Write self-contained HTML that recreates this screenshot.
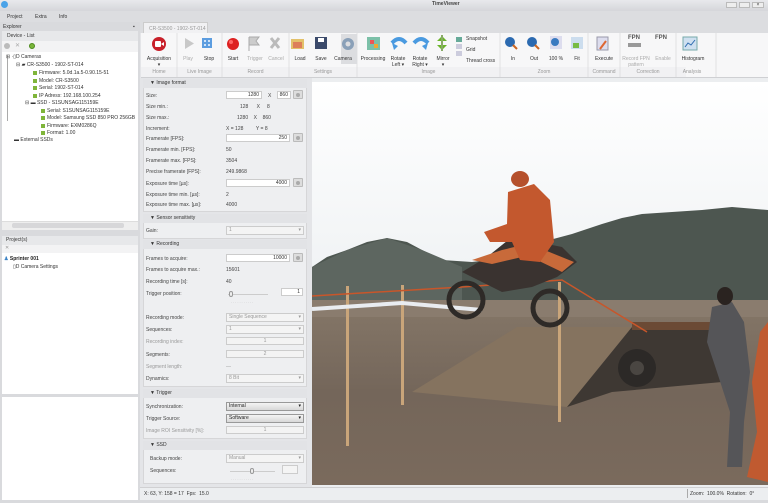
<!DOCTYPE html>
<html><head><meta charset="utf-8"><style>
*{margin:0;padding:0;box-sizing:border-box}
body{width:768px;height:503px;overflow:hidden;background:#e4e5e8;font-family:"Liberation Sans",sans-serif;font-size:5px;color:#333;position:relative}
.a{position:absolute;white-space:nowrap}
.lbl{position:absolute;left:146px;font-size:5px;color:#444}
.val{position:absolute;font-size:5px;color:#444}
.in{position:absolute;left:226px;width:64px;height:8px;background:#fff;border:1px solid #ccc;font-size:5px;text-align:right;padding-right:2px;line-height:6px}
.dis{background:#f3f3f3;color:#999;text-align:left;padding-left:2px}
.btn{position:absolute;left:293px;width:10px;height:9px;border:1px solid #bbb;background:#ddd;border-radius:1px}
.btn::after{content:"";position:absolute;left:2px;top:2px;width:4px;height:4px;border-radius:50%;background:#aaa}
.sec{position:absolute;left:143px;width:164px;background:#eeeff1;border:1px solid #d6d6d8}
.hd{position:absolute;left:143px;width:164px;height:9px;background:#e2e3e6;font-size:5px;line-height:9px;padding-left:7px;color:#333}
.dd{position:absolute;left:226px;width:78px;height:9px;border:1px solid #ccc;background:#f4f4f4;font-size:5px;line-height:7px;padding-left:2px;color:#999}
.dd::after{content:"▾";position:absolute;right:2px;top:0;color:#999}
.dk{background:linear-gradient(#f4f4f4,#d8d8d8);color:#222;border-color:#999}
.dk::after{color:#222}
.rl{position:absolute;top:56px;font-size:5px;color:#333;text-align:center}
.gl{position:absolute;top:69px;font-size:5px;color:#999;text-align:center}
.tr{position:absolute;font-size:5px;color:#333}
.sq{display:inline-block;width:4px;height:4px;background:#7fb53a;margin-right:2px;vertical-align:-0.5px}
</style></head><body>
<div class="a" style="left:0;top:0;width:768px;height:11px;background:linear-gradient(#e8e9ec,#d5d6da)"></div>
<div class="a" style="left:1px;top:1px;width:7px;height:7px;border-radius:50%;background:#4aa3e8"></div>
<div class="a" style="left:432px;top:1px;font-size:5px;font-weight:bold;color:#444">TimeViewer</div>
<div class="a" style="left:726px;top:2px;width:11px;height:6px;border:1px solid #bbb;background:#eee"></div>
<div class="a" style="left:739px;top:2px;width:11px;height:6px;border:1px solid #bbb;background:#eee"></div>
<div class="a" style="left:752px;top:2px;width:12px;height:6px;border:1px solid #bbb;background:#eee;font-size:5px;text-align:center;line-height:5px">×</div>
<div class="a" style="left:0;top:11px;width:768px;height:11px;background:#dcdde0"></div>
<div class="a" style="left:7px;top:14px;font-size:5px">Project</div>
<div class="a" style="left:35px;top:14px;font-size:5px">Extra</div>
<div class="a" style="left:59px;top:14px;font-size:5px">Info</div>
<div class="a" style="left:0;top:22px;width:140px;height:481px;background:#d9dadd"></div>
<div class="a" style="left:3px;top:24px;font-size:5px;color:#333">Explorer</div>
<div class="a" style="left:133px;top:24px;font-size:5px">▪</div>
<div class="a" style="left:2px;top:31px;width:136px;height:10px;background:#e7e8ea"></div>
<div class="a" style="left:7px;top:33px;font-size:5px">Device - List</div>
<div class="a" style="left:2px;top:41px;width:136px;height:11px;background:#f3f3f4"></div>
<div class="a" style="left:4px;top:43px;width:6px;height:6px;border-radius:50%;background:#bbb"></div>
<div class="a" style="left:15px;top:42px;font-size:6px;color:#aaa">✕</div>
<div class="a" style="left:29px;top:43px;width:6px;height:6px;border-radius:50%;background:#7ab53a;border:1px solid #4d8a1c"></div>
<div class="a" style="left:2px;top:52px;width:136px;height:169px;background:#fff"></div>
<div class="a" style="left:7px;top:55px;width:1px;height:66px;background:#aaa"></div>
<div class="tr" style="left:6px;top:54px">⊟ ·▯D Cameras</div>
<div class="tr" style="left:16px;top:62px">⊟ ▰ CR-S3500 - 1902-ST-014</div>
<div class="tr" style="left:33px;top:70px"><span class="sq"></span>Firmware: 5.0d.1a.5-0.90.15-51</div>
<div class="tr" style="left:33px;top:78px"><span class="sq"></span>Model: CR-S3500</div>
<div class="tr" style="left:33px;top:85px"><span class="sq"></span>Serial: 1902-ST-014</div>
<div class="tr" style="left:33px;top:93px"><span class="sq"></span>IP Adress: 192.168.100.254</div>
<div class="tr" style="left:25px;top:100px">⊟ ▬ SSD - S1SUNSAG115159E</div>
<div class="tr" style="left:41px;top:108px"><span class="sq"></span>Serial: S1SUNSAG115159E</div>
<div class="tr" style="left:41px;top:115px"><span class="sq"></span>Model: Samsung SSD 850 PRO 256GB</div>
<div class="tr" style="left:41px;top:123px"><span class="sq"></span>Firmware: EXM0286Q</div>
<div class="tr" style="left:41px;top:130px"><span class="sq"></span>Format: 1.00</div>
<div class="tr" style="left:14px;top:137px">▬ External SSDs</div>
<div class="a" style="left:2px;top:221px;width:136px;height:9px;background:#eee;border-top:1px solid #ddd"></div>
<div class="a" style="left:12px;top:223px;width:112px;height:5px;background:#d7d7d9;border-radius:2px"></div>
<div class="a" style="left:2px;top:236px;width:136px;height:9px;background:#e7e8ea"></div>
<div class="a" style="left:6px;top:237px;font-size:5px">Project(s)</div>
<div class="a" style="left:2px;top:245px;width:136px;height:8px;background:#f3f3f4"></div>
<div class="a" style="left:5px;top:245px;font-size:5px;color:#999">✕</div>
<div class="a" style="left:2px;top:253px;width:136px;height:141px;background:#fff"></div>
<div class="a" style="left:4px;top:256px;font-size:5px;font-weight:bold;color:#222"><span style="color:#3b82c4">♟</span> Sprinter 001</div>
<div class="a" style="left:13px;top:264px;font-size:5px">▯D Camera Settings</div>
<div class="a" style="left:2px;top:397px;width:136px;height:103px;background:#fff"></div>
<div class="a" style="left:140px;top:22px;width:628px;height:11px;background:#dcdde0"></div>
<div class="a" style="left:143px;top:22px;width:65px;height:11px;background:#f1f1f3;border:1px solid #ccc;border-bottom:none;font-size:5px;color:#999;padding:3px 0 0 5px">CR-S3500 - 1902-ST-014</div>
<div class="a" style="left:141px;top:33px;width:627px;height:45px;background:#f7f7f8;border-bottom:1px solid #cfd0d3"></div>
<div class="a" style="left:141px;top:67px;width:545px;height:10px;background:#f1f1f3"></div>
<svg class="a" style="left:141px;top:33px" width="627" height="45">
<g stroke="#e0e0e2" stroke-width="1"><line x1="36" y1="0" x2="36" y2="44"/><line x1="81" y1="0" x2="81" y2="44"/><line x1="148" y1="0" x2="148" y2="44"/><line x1="216" y1="0" x2="216" y2="44"/><line x1="359" y1="0" x2="359" y2="44"/><line x1="447" y1="0" x2="447" y2="44"/><line x1="479" y1="0" x2="479" y2="44"/><line x1="535" y1="0" x2="535" y2="44"/><line x1="575" y1="0" x2="575" y2="44"/></g>
<circle cx="18" cy="11" r="7" fill="#c8202a"/><rect x="14" y="8" width="6" height="6" rx="1" fill="#fff"/><path d="M20 11l3-2v4z" fill="#fff"/>
<path d="M44 5v11l9-5.5z" fill="#c8c8c8"/>
<rect x="61" y="5" width="10" height="10" fill="#5c9de0"/><g fill="#cfe3f8"><rect x="63" y="7" width="2" height="2"/><rect x="67" y="7" width="2" height="2"/><rect x="63" y="11" width="2" height="2"/><rect x="67" y="11" width="2" height="2"/></g>
<circle cx="92" cy="11" r="6" fill="#d22"/><circle cx="90" cy="9" r="2" fill="#f66"/>
<path d="M108 4v14M108 4h10l-3 4 3 4h-10" stroke="#aaa" fill="#ccc"/>
<path d="M130 5l8 10M138 5l-8 10" stroke="#bbb" stroke-width="3"/>
<rect x="150" y="6" width="13" height="10" fill="#e3c16a"/><rect x="152" y="9" width="9" height="6" fill="#d9534f" opacity=".6"/>
<rect x="174" y="4" width="12" height="12" fill="#3b4a6b"/><rect x="177" y="5" width="6" height="4" fill="#fff"/>
<rect x="200" y="1" width="16" height="30" fill="#dcdde0"/><circle cx="207" cy="11" r="6" fill="#8aa0b8"/><circle cx="207" cy="11" r="2.5" fill="#dcdde0"/>
<rect x="226" y="4" width="13" height="13" fill="#7cc0a8"/><rect x="229" y="7" width="4" height="4" fill="#e55"/><rect x="233" y="11" width="4" height="4" fill="#ea3"/>
<path d="M251 10q7-8 14 0" stroke="#4a9ae0" stroke-width="4" fill="none"/><path d="M251 10l2 7 4-4z" fill="#4a9ae0"/>
<path d="M273 10q7-8 14 0" stroke="#4a9ae0" stroke-width="4" fill="none"/><path d="M287 10l-2 7-4-4z" fill="#4a9ae0"/>
<path d="M296 8h10l-5-5zM296 12h10l-5 5z" fill="#6ab42a"/><rect x="300" y="2" width="2" height="16" fill="#8a6"/>
<rect x="315" y="4" width="6" height="5" fill="#6a9"/><rect x="315" y="11" width="6" height="5" fill="#ccd"/><rect x="315" y="18" width="6" height="5" fill="#ccd"/>
<circle cx="369" cy="9" r="5" fill="#2c6ab0"/><path d="M372 12l4 4" stroke="#c62" stroke-width="2"/>
<circle cx="391" cy="9" r="5" fill="#2c6ab0"/><path d="M394 12l4 4" stroke="#c62" stroke-width="2"/>
<rect x="409" y="3" width="12" height="13" fill="#dde"/><circle cx="414" cy="9" r="4" fill="#3a7ac0"/>
<rect x="430" y="4" width="12" height="12" fill="#cde"/><rect x="432" y="10" width="6" height="5" fill="#7b4"/>
<rect x="456" y="4" width="11" height="13" fill="#dde" stroke="#99a"/><path d="M465 8l-6 8" stroke="#d63" stroke-width="2"/>
<rect x="487" y="10" width="13" height="4" fill="#999"/>
<rect x="542" y="4" width="14" height="13" fill="#cfe0f0" stroke="#7aa"/><path d="M544 14l3-4 3 2 4-5" stroke="#2c6ab0" fill="none"/>
</svg>
<div class="rl" style="left:141px;width:36px">Acquisition<br>▾</div>
<div class="rl" style="left:181px;width:14px;color:#aaa">Play</div>
<div class="rl" style="left:200px;width:18px">Stop</div>
<div class="rl" style="left:224px;width:18px">Start</div>
<div class="rl" style="left:244px;width:22px;color:#aaa">Trigger</div>
<div class="rl" style="left:266px;width:20px;color:#aaa">Cancel</div>
<div class="rl" style="left:290px;width:20px">Load</div>
<div class="rl" style="left:311px;width:20px">Save</div>
<div class="rl" style="left:331px;width:24px">Camera</div>
<div class="rl" style="left:358px;width:30px">Processing</div>
<div class="rl" style="left:386px;width:24px">Rotate<br>Left ▾</div>
<div class="rl" style="left:408px;width:24px">Rotate<br>Right ▾</div>
<div class="rl" style="left:432px;width:22px">Mirror<br>▾</div>
<div class="a" style="left:466px;top:36px;font-size:5px">Snapshot</div>
<div class="a" style="left:466px;top:47px;font-size:5px">Grid</div>
<div class="a" style="left:466px;top:58px;font-size:5px">Thread cross</div>
<div class="rl" style="left:503px;width:20px">In</div>
<div class="rl" style="left:524px;width:20px">Out</div>
<div class="rl" style="left:545px;width:22px">100 %</div>
<div class="rl" style="left:567px;width:20px">Fit</div>
<div class="rl" style="left:589px;width:30px">Execute</div>
<div class="a" style="left:628px;top:35px;font-size:6px;font-weight:bold;color:#555">FPN</div>
<div class="a" style="left:655px;top:35px;font-size:6px;font-weight:bold;color:#555">FPN</div>
<div class="rl" style="left:620px;width:32px;color:#aaa">Record FPN<br>pattern</div>
<div class="rl" style="left:650px;width:26px;color:#aaa">Enable</div>
<div class="rl" style="left:676px;width:34px">Histogram</div>
<div class="gl" style="left:141px;width:36px">Home</div>
<div class="gl" style="left:177px;width:45px">Live Image</div>
<div class="gl" style="left:222px;width:67px">Record</div>
<div class="gl" style="left:289px;width:68px">Settings</div>
<div class="gl" style="left:357px;width:143px">Image</div>
<div class="gl" style="left:500px;width:88px">Zoom</div>
<div class="gl" style="left:588px;width:32px">Command</div>
<div class="gl" style="left:620px;width:56px">Correction</div>
<div class="gl" style="left:676px;width:32px">Analysis</div>
<div class="a" style="left:140px;top:78px;width:172px;height:409px;background:#e4e5e8"></div>
<div class="sec" style="top:79px;height:133px"></div>
<div class="hd" style="top:79px">▼ Image format</div>
<div class="lbl" style="top:93px">Size:</div><div class="in" style="top:91px;width:36px">1280</div><div class="val" style="left:268px;top:93px">X</div><div class="in" style="top:91px;left:277px;width:14px">860</div><div class="btn" style="top:90px"></div>
<div class="lbl" style="top:104px">Size min.:</div><div class="val" style="left:240px;top:104px">128 &nbsp;&nbsp;&nbsp;&nbsp;&nbsp;X &nbsp;&nbsp;&nbsp;&nbsp;8</div>
<div class="lbl" style="top:115px">Size max.:</div><div class="val" style="left:237px;top:115px">1280 &nbsp;&nbsp;&nbsp;X &nbsp;&nbsp;&nbsp;860</div>
<div class="lbl" style="top:126px">Increment:</div><div class="val" style="left:226px;top:126px">X = 128 &nbsp;&nbsp;&nbsp;&nbsp;&nbsp;&nbsp;&nbsp;&nbsp;Y = 8</div>
<div class="lbl" style="top:136px">Framerate [FPS]:</div><div class="in" style="top:134px">250</div><div class="btn" style="top:133px"></div>
<div class="lbl" style="top:147px">Framerate min. [FPS]:</div><div class="val" style="left:226px;top:147px">50</div>
<div class="lbl" style="top:158px">Framerate max. [FPS]:</div><div class="val" style="left:226px;top:158px">3504</div>
<div class="lbl" style="top:169px">Precise framerate [FPS]:</div><div class="val" style="left:226px;top:169px">249.9868</div>
<div class="lbl" style="top:181px">Exposure time [µs]:</div><div class="in" style="top:179px">4000</div><div class="btn" style="top:178px"></div>
<div class="lbl" style="top:192px">Exposure time min. [µs]:</div><div class="val" style="left:226px;top:192px">2</div>
<div class="lbl" style="top:202px">Exposure time max. [µs]:</div><div class="val" style="left:226px;top:202px">4000</div>
<div class="sec" style="top:214px;height:25px"></div>
<div class="hd" style="top:214px">▼ Sensor sensitivity</div>
<div class="lbl" style="top:228px">Gain:</div><div class="dd" style="top:226px">1</div>
<div class="sec" style="top:240px;height:147px"></div>
<div class="hd" style="top:240px">▼ Recording</div>
<div class="lbl" style="top:256px">Frames to acquire:</div><div class="in" style="top:254px">10000</div><div class="btn" style="top:253px"></div>
<div class="lbl" style="top:267px">Frames to acquire max.:</div><div class="val" style="left:226px;top:267px">15601</div>
<div class="lbl" style="top:279px">Recording time [s]:</div><div class="val" style="left:226px;top:279px">40</div>
<div class="lbl" style="top:291px">Trigger position:</div>
<div class="a" style="left:228px;top:294px;width:40px;height:1px;background:#ccc"></div>
<div class="a" style="left:229px;top:291px;width:4px;height:6px;background:#eee;border:1px solid #999;border-radius:2px"></div>
<div class="a" style="left:231px;top:299px;font-size:4px;color:#aaa;letter-spacing:1px">...........</div>
<div class="in" style="top:288px;left:281px;width:22px">1</div>
<div class="lbl" style="top:315px">Recording mode:</div><div class="dd" style="top:313px">Single Sequence</div>
<div class="lbl" style="top:327px">Sequences:</div><div class="dd" style="top:325px">1</div>
<div class="lbl" style="top:339px;color:#999">Recording index:</div><div class="in dis" style="top:337px;width:78px;text-align:center">1</div>
<div class="lbl" style="top:352px">Segments:</div><div class="in dis" style="top:350px;width:78px;text-align:center">2</div>
<div class="lbl" style="top:364px;color:#999">Segment length:</div><div class="val" style="left:226px;top:364px;color:#999">—</div>
<div class="lbl" style="top:376px">Dynamics:</div><div class="dd" style="top:374px">8 Bit</div>
<div class="sec" style="top:389px;height:50px"></div>
<div class="hd" style="top:389px">▼ Trigger</div>
<div class="lbl" style="top:404px">Synchronization:</div><div class="dd dk" style="top:402px">Internal</div>
<div class="lbl" style="top:416px">Trigger Source:</div><div class="dd dk" style="top:414px">Software</div>
<div class="lbl" style="top:428px;color:#999">Image ROI Sensitivity [%]:</div><div class="in dis" style="top:426px;width:78px;text-align:center">1</div>
<div class="sec" style="top:441px;height:43px"></div>
<div class="hd" style="top:441px">▼ SSD</div>
<div class="lbl" style="top:456px;left:150px">Backup mode:</div><div class="dd" style="top:454px">Manual</div>
<div class="lbl" style="top:468px;left:150px">Sequences:</div>
<div class="a" style="left:230px;top:471px;width:45px;height:1px;background:#ccc"></div>
<div class="a" style="left:250px;top:468px;width:4px;height:6px;background:#eee;border:1px solid #999;border-radius:2px"></div>
<div class="a" style="left:231px;top:476px;font-size:4px;color:#aaa;letter-spacing:1px">...........</div>
<div class="a" style="left:282px;top:465px;width:16px;height:9px;background:#f4f4f4;border:1px solid #ccc"></div>
<!-- photo -->
<div class="a" style="left:312px;top:78px;width:456px;height:409px;background:#eceef0"></div>
<svg class="a" style="left:312px;top:82px;width:456px;height:403px" width="456" height="403" viewBox="0 0 456 403" preserveAspectRatio="none">
<defs><linearGradient id="sk" x1="0" y1="0" x2="0" y2="1"><stop offset="0" stop-color="#ffffff"/><stop offset=".55" stop-color="#eef1f3"/><stop offset="1" stop-color="#d8dee2"/></linearGradient>
<linearGradient id="gr" x1="0" y1="0" x2="0" y2="1"><stop offset="0" stop-color="#857768"/><stop offset=".5" stop-color="#74665a"/><stop offset="1" stop-color="#7a6a5c"/></linearGradient></defs>
<rect width="456" height="403" fill="url(#sk)"/>
<path d="M0 185 L15 175 L35 168 L55 160 L75 156 L95 160 L110 168 L130 178 L160 180 L200 175 L230 160 L260 152 L290 142 L310 136 L330 132 L360 130 L390 128 L420 125 L456 128 L456 222 L0 222Z" fill="#4d5650"/>
<path d="M0 185 L35 168 L75 156 L110 168 L150 185 L150 222 L0 222Z" fill="#5d6660"/>
<rect x="0" y="218" width="456" height="185" fill="url(#gr)"/>
<path d="M0 218 L456 218 L456 235 L0 235Z" fill="#8a7c6e"/>
<path d="M100 310 L205 245 L320 245 L255 325Z" fill="#85735f"/>
<path d="M255 325 L320 245 L415 245 L410 300 L300 310Z" fill="#3e3833"/>
<rect x="320" y="240" width="100" height="8" fill="#6b4a35"/>
<circle cx="325" cy="286" r="19" fill="#2c2927"/><circle cx="325" cy="286" r="7" fill="#4a4642"/>
<g fill="#c9a57a"><rect x="34" y="204" width="3" height="160"/><rect x="89" y="203" width="3" height="120"/><rect x="246" y="200" width="3" height="140"/></g>
<path d="M0 214 L150 205 L250 198 L335 250" stroke="#c8562a" stroke-width="1.5" fill="none"/>
<path d="M0 227 L90 221 L170 228" stroke="#e9ecf0" stroke-width="4" fill="none"/>
<circle cx="154" cy="218" r="17" fill="none" stroke="#2e2a27" stroke-width="5"/>
<circle cx="238" cy="226" r="17" fill="none" stroke="#2e2a27" stroke-width="5"/>
<path d="M150 190 L175 175 L200 155 L225 160 L250 165 L265 180 L245 195 L220 205 L190 210Z" fill="#3a3330"/>
<path d="M160 178 L190 168 L215 162 L210 175 L180 182Z" fill="#c86a3a"/>
<path d="M225 165 L262 180 L250 190 L225 178Z" fill="#c86a3a"/>
<path d="M196 110 L222 102 L238 118 L242 160 L228 180 L208 178 L200 160 L178 160 L172 150 L195 142Z" fill="#c3582e"/>
<ellipse cx="208" cy="97" rx="9" ry="8" fill="#b5502c"/>
<path d="M400 225 L420 220 L432 240 L438 290 L432 340 L430 385 L415 385 L418 330 L405 290 L395 260Z" fill="#555558"/>
<ellipse cx="413" cy="214" rx="8" ry="9" fill="#2a2320"/>
<path d="M448 250 L456 240 L456 400 L435 395 L445 350 L440 300Z" fill="#c05a30"/>
</svg>
<div class="a" style="left:140px;top:487px;width:628px;height:13px;background:#eceef0;border-top:1px solid #d0d0d2"></div>
<div class="a" style="left:144px;top:491px;font-size:5px;color:#333">X: 63, Y: 158 = 17 &nbsp;Fps: &nbsp;15.0</div>
<div class="a" style="left:687px;top:489px;width:1px;height:9px;background:#aaa"></div>
<div class="a" style="left:690px;top:491px;font-size:5px;color:#333">Zoom: &nbsp;100.0% &nbsp;Rotation: &nbsp;0°</div>
<div class="a" style="left:0;top:500px;width:768px;height:3px;background:#d9dadd"></div>
</body></html>
